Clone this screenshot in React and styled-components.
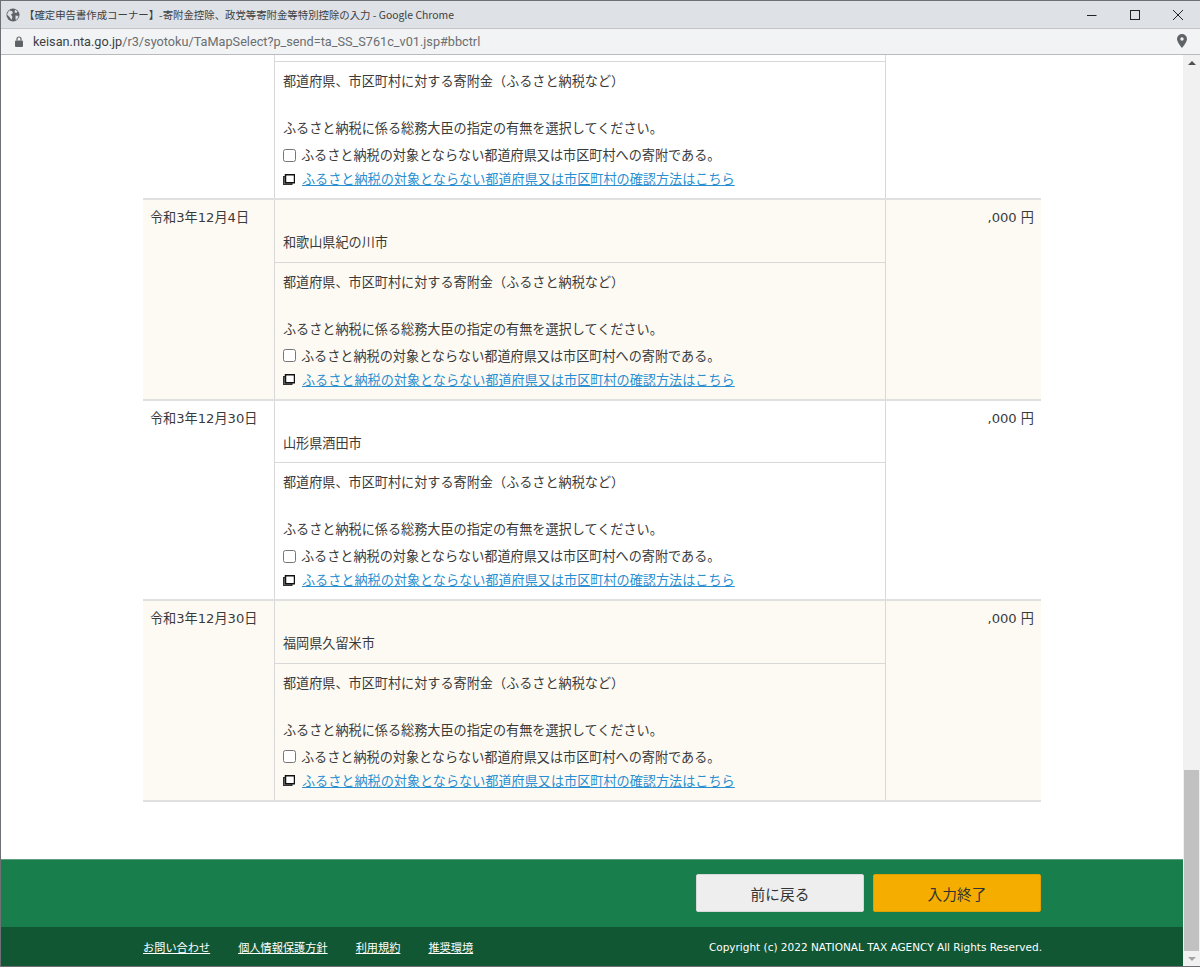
import styled, { createGlobalStyle } from "styled-components";

const GlobalStyle = createGlobalStyle`
    html, body { margin: 0; padding: 0; background: #fff; overflow: hidden; }
    * { box-sizing: border-box; }
    body { font-family: "Noto Sans CJK JP", "Noto Sans", sans-serif; color: #3a3a3a; }
`;

const CHECK_LABEL = "ふるさと納税の対象とならない都道府県又は市区町村への寄附である。";
const LINK_LABEL = "ふるさと納税の対象とならない都道府県又は市区町村の確認方法はこちら";

const rows = [
    { date: "", place: "", amount: "", partial: true },
    { date: "令和3年12月4日", place: "和歌山県紀の川市", amount: ",000 円", tinted: true },
    { date: "令和3年12月30日", place: "山形県酒田市", amount: ",000 円" },
    { date: "令和3年12月30日", place: "福岡県久留米市", amount: ",000 円", tinted: true },
];

const GlobeIcon = () => (
    <svg width="14" height="14" viewBox="0 0 14 14">
        <circle cx="7" cy="7" r="6.500" fill="#5f6368" />
        <path d="M3 2.500l3 .5 1 2-2 1.500 1.500 2.500-1 3-2-3-2.500-2.500zM9 1.500l2.500 2-1 1.500-2-.5zM9.500 7.500l3 .5-1.500 3.500-1.500 0z" fill="#dee1e6" />
    </svg>
);

const LockIcon = () => (
    <svg width="8" height="11" viewBox="0 0 8 11">
        <path d="M2 4.500V3a2 2 0 0 1 4 0v1.500" fill="none" stroke="#5f6368" strokeWidth="1.200" />
        <rect x="0" y="4.500" width="8" height="6.500" rx="1" fill="#5f6368" />
    </svg>
);

const PinIcon = () => (
    <svg width="10" height="14" viewBox="0 0 10 14">
        <path fillRule="evenodd" d="M5 0a5 5 0 0 1 5 5c0 3.200-5 9-5 9S0 8.200 0 5a5 5 0 0 1 5-5zm0 3.300a1.700 1.700 0 1 0 0 3.400 1.700 1.700 0 0 0 0-3.400z" fill="#5f6368" />
    </svg>
);

const WindowsIcon = () => (
    <svg width="12" height="11" viewBox="0 0 12 11">
        <rect x="0.500" y="2.500" width="8.500" height="8" fill="#777" stroke="#333" />
        <rect x="2.500" y="0.750" width="9" height="8" fill="#fff" stroke="#111" strokeWidth="1.500" />
    </svg>
);

const DonationRow = ({ date, place, amount, tinted, partial }) => (
    <Row $tinted={tinted}>
        <DateCell>{date}</DateCell>
        <DetailCell>
            <PlaceBlock $partial={partial}>{place}</PlaceBlock>
            <KindBlock>
                <KindTitle>都道府県、市区町村に対する寄附金（ふるさと納税など）</KindTitle>
                <Question>ふるさと納税に係る総務大臣の指定の有無を選択してください。</Question>
                <CheckLine>
                    <CheckBox type="checkbox" />
                    {CHECK_LABEL}
                </CheckLine>
                <LinkLine>
                    <WindowsIcon />
                    <HelpLink href="#">{LINK_LABEL}</HelpLink>
                </LinkLine>
            </KindBlock>
        </DetailCell>
        <AmountCell>{amount}</AmountCell>
    </Row>
);

export default function App() {
    return (
        <>
            <GlobalStyle />
            <Win>
                <TitleBar>
                    <GlobeIcon />
                    <TitleText>【確定申告書作成コーナー】-寄附金控除、政党等寄附金等特別控除の入力 - Google Chrome</TitleText>
                    <WinButtons>
                        <WinButton>
                            <svg width="12" height="12" viewBox="0 0 12 12"><path d="M1 6.500h9.500" stroke="#222" strokeWidth="1" /></svg>
                        </WinButton>
                        <WinButton>
                            <svg width="12" height="12" viewBox="0 0 12 12"><rect x="1.500" y="1.500" width="9" height="9" fill="none" stroke="#222" /></svg>
                        </WinButton>
                        <WinButton>
                            <svg width="12" height="12" viewBox="0 0 12 12"><path d="M1 1l10 10M11 1L1 11" stroke="#222" strokeWidth="1" /></svg>
                        </WinButton>
                    </WinButtons>
                </TitleBar>
                <AddressBar>
                    <LockIcon />
                    <Url><b>keisan.nta.go.jp</b>/r3/syotoku/TaMapSelect?p_send=ta_SS_S761c_v01.jsp#bbctrl</Url>
                    <PinIcon />
                </AddressBar>
                <Viewport>
                    <Page>
                        <Content>
                            <Table>
                                {rows.map((row, i) => (
                                    <DonationRow key={i} {...row} />
                                ))}
                            </Table>
                        </Content>
                        <ButtonBar>
                            <ButtonRow>
                                <BackButton>前に戻る</BackButton>
                                <DoneButton>入力終了</DoneButton>
                            </ButtonRow>
                        </ButtonBar>
                        <Footer>
                            <FooterInner>
                                <FooterLinks>
                                    <FooterLink href="#">お問い合わせ</FooterLink>
                                    <FooterLink href="#">個人情報保護方針</FooterLink>
                                    <FooterLink href="#">利用規約</FooterLink>
                                    <FooterLink href="#">推奨環境</FooterLink>
                                </FooterLinks>
                                <Copyright>Copyright (c) 2022 NATIONAL TAX AGENCY All Rights Reserved.</Copyright>
                            </FooterInner>
                        </Footer>
                    </Page>
                    <ScrollBar>
                        <ArrowUp />
                        <ThumbTrack>
                            <Thumb />
                        </ThumbTrack>
                        <ArrowDown />
                    </ScrollBar>
                </Viewport>
            </Win>
        </>
    );
}

const Win = styled.div`
    width: 1200px;
    height: 967px;
    display: flex;
    flex-direction: column;
    border: 1px solid #6d7176;
    border-right: 0;
    overflow: hidden;
`;

const TitleBar = styled.div`
    height: 28px;
    flex: none;
    display: flex;
    align-items: center;
    padding-left: 5px;
    background: #dee1e6;
    border-bottom: 1px solid #c2c4c8;
`;

const TitleText = styled.div`
    margin-left: 4px;
    font-size: 10.400px;
    color: #3c4043;
    white-space: nowrap;
`;

const WinButtons = styled.div`
    margin-left: auto;
    display: flex;
`;

const WinButton = styled.div`
    width: 45px;
    height: 27px;
    display: flex;
    align-items: center;
    justify-content: center;
    margin-left: -2px;
`;

const AddressBar = styled.div`
    height: 26px;
    flex: none;
    display: flex;
    align-items: center;
    padding: 0 13px 1px 14px;
    background: #f1f3f4;
    border-bottom: 1px solid #b9bbbe;
`;

const Url = styled.div`
    flex: 1;
    margin-left: 10px;
    font-family: "Roboto", "Liberation Sans", sans-serif;
    font-size: 12.700px;
    color: #6b6e72;
    b {
        font-weight: 400;
        color: #3c3f43;
    }
`;

const Viewport = styled.div`
    flex: 1;
    min-height: 0;
    display: flex;
`;

const Page = styled.div`
    flex: 1;
    display: flex;
    flex-direction: column;
    background: #fff;
`;

const Content = styled.div`
    flex: 1;
    padding-left: 142px;
`;

const Table = styled.div`
    width: 898px;
    border-bottom: 2px solid #e0e0e0;
`;

const Row = styled.div`
    display: flex;
    background: ${({ $tinted }) => ($tinted ? "#fdfaf4" : "#fff")};
    & + & {
        border-top: 2px solid #e0e0e0;
    }
`;

const DateCell = styled.div`
    width: 132px;
    flex: none;
    padding: 8px 7px;
    font-family: "DejaVu Sans", "Noto Sans CJK JP", sans-serif;
    font-size: 13.130px;
    line-height: 20px;
    border-right: 1px solid #d8d8d8;
`;

const DetailCell = styled.div`
    width: 611px;
    flex: none;
    border-right: 1px solid #d8d8d8;
`;

const PlaceBlock = styled.div`
    height: ${({ $partial }) => ($partial ? "7px" : "62.670px")};
    padding: ${({ $partial }) => ($partial ? "0 8px" : "32px 8px 0")};
    font-size: 13.130px;
    line-height: 20px;
    border-bottom: 1px solid #d8d8d8;
`;

const KindBlock = styled.div`
    padding: 9px 8px;
    font-size: 13.130px;
    line-height: 20px;
`;

const KindTitle = styled.div``;

const Question = styled.div`
    margin-top: 27px;
`;

const CheckLine = styled.label`
    display: flex;
    align-items: center;
    margin-top: 7px;
`;

const CheckBox = styled.input`
    width: 13px;
    height: 13px;
    margin: 0 5px 0 0;
`;

const LinkLine = styled.div`
    display: flex;
    align-items: center;
    gap: 7px;
    margin-top: 4px;
`;

const HelpLink = styled.a`
    color: #2a8fd0;
    text-decoration: underline;
`;

const AmountCell = styled.div`
    flex: 1;
    padding: 8px 7px 8px 0;
    font-family: "DejaVu Sans", "Noto Sans CJK JP", sans-serif;
    font-size: 13.130px;
    line-height: 20px;
    text-align: right;
`;

const ButtonBar = styled.div`
    height: 68px;
    flex: none;
    padding: 14px 0 0 695px;
    background: #187f4c;
    border-top: 1px solid #5f9e80;
`;

const ButtonRow = styled.div`
    display: flex;
    gap: 9px;
`;

const BackButton = styled.button`
    width: 168px;
    height: 38px;
    padding: 0;
    font: inherit;
    font-size: 14.700px;
    color: #333;
    background: #eee;
    border: 1px solid #d8d8d8;
    border-radius: 2px;
`;

const DoneButton = styled(BackButton)`
    background: #f5ae00;
    border-color: #e0a000;
`;

const Footer = styled.div`
    height: 39px;
    flex: none;
    background: #125733;
`;

const FooterInner = styled.div`
    width: 899px;
    height: 100%;
    margin-left: 142px;
    display: flex;
    align-items: center;
    justify-content: space-between;
    color: #fff;
    font-size: 11.200px;
`;

const FooterLinks = styled.div`
    display: flex;
    gap: 28px;
`;

const FooterLink = styled.a`
    color: #fff;
    text-decoration: underline;
`;

const Copyright = styled.div`
    font-family: "DejaVu Sans", sans-serif;
    font-size: 10.500px;
`;

const ScrollBar = styled.div`
    width: 17px;
    flex: none;
    display: flex;
    flex-direction: column;
    background: #f1f1f1;
`;

const ArrowUp = styled.div`
    width: 0;
    height: 0;
    margin: 6px 0 5px 4.500px;
    border: 4px solid transparent;
    border-top: 0;
    border-bottom: 4px solid #505050;
`;

const ArrowDown = styled(ArrowUp)`
    border-bottom: 0;
    border-top: 4px solid #a3a3a3;
`;

const ThumbTrack = styled.div`
    flex: 1;
    display: flex;
    flex-direction: column;
    justify-content: flex-end;
`;

const Thumb = styled.div`
    height: 181px;
    margin: 0 1px;
    background: #c1c1c1;
`;
